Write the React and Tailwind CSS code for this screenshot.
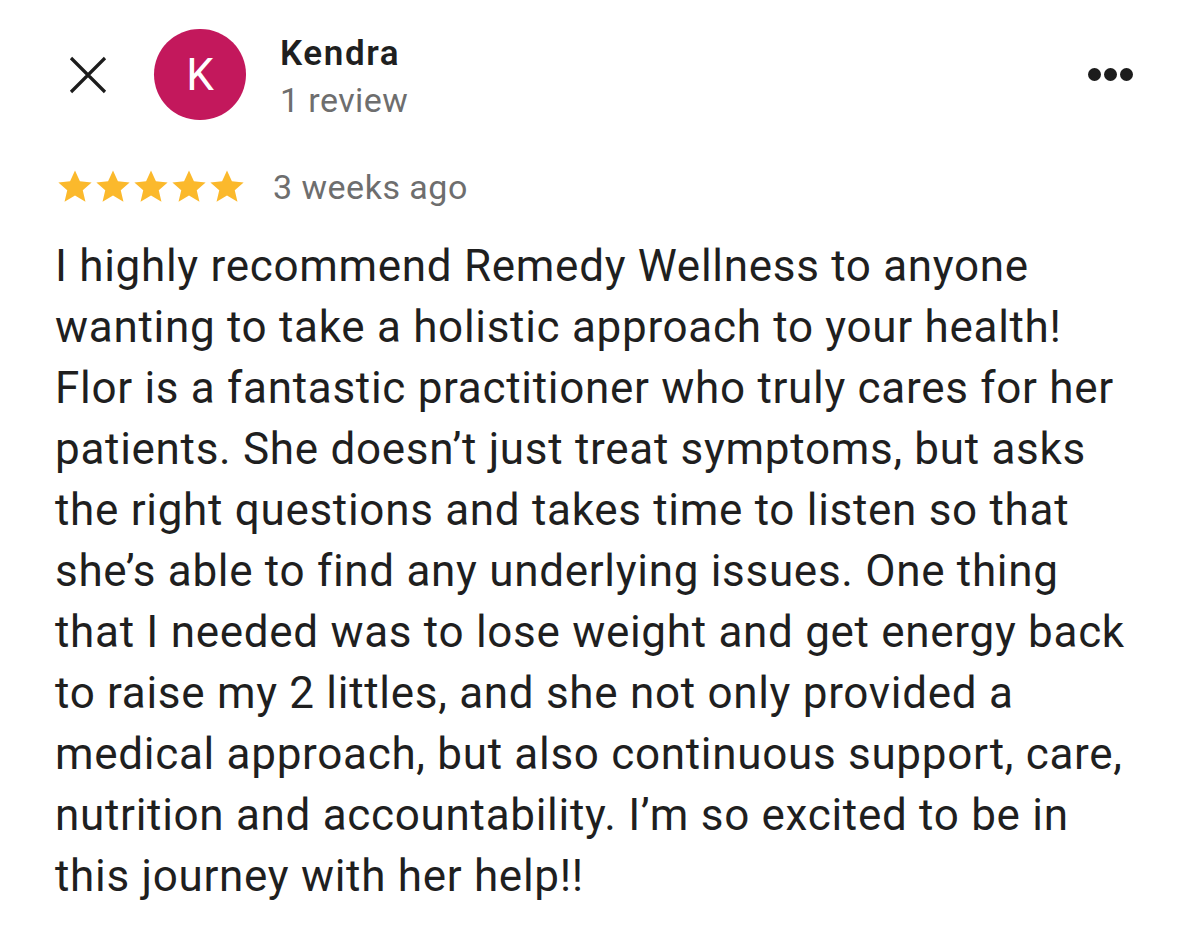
import React from 'react';

const lines = [
  'I highly recommend Remedy Wellness to anyone',
  'wanting to take a holistic approach to your health!',
  'Flor is a fantastic practitioner who truly cares for her',
  'patients. She doesn\u2019t just treat symptoms, but asks',
  'the right questions and takes time to listen so that',
  'she\u2019s able to find any underlying issues. One thing',
  'that I needed was to lose weight and get energy back',
  'to raise my 2 littles, and she not only provided a',
  'medical approach, but also continuous support, care,',
  'nutrition and accountability. I\u2019m so excited to be in',
  'this journey with her help!!',
];

const Star = () => (
  <svg width="38" height="38" viewBox="0 0 24 24" className="shrink-0">
    <path
      d="M12 1.5l3.1 6.9 7.4.7-5.6 4.9 1.7 7.3L12 17.4l-6.6 3.9 1.7-7.3L1.5 9.1l7.4-.7z"
      fill="#fbb92c"
    />
  </svg>
);

const App = () => {
  return (
    <div className="w-[1200px] h-[951px] bg-white overflow-hidden font-['Roboto',sans-serif] text-[#1f1f1f]">
      {/* header */}
      <div className="flex items-center pl-[69px] pr-[67px] pt-[29px]">
        <svg width="38" height="38" viewBox="0 0 38 38" className="shrink-0">
          <path d="M2 2L36 36M36 2L2 36" stroke="#1c1c1c" strokeWidth="3.2" />
        </svg>
        <div className="ml-[47px] w-[92px] h-[91px] rounded-full bg-[#c3185c] flex items-center justify-center text-white text-[44px] leading-none shrink-0">
          K
        </div>
        <div className="ml-[34px] flex flex-col self-start pt-[5px]">
          <span className="text-[35px] leading-[40px] font-semibold tracking-[1.6px] text-[#1f1f1f]">Kendra</span>
          <span className="mt-[6px] text-[34px] leading-[40px] tracking-[0.4px] text-[#6e6e6e]">1 review</span>
        </div>
        <div className="ml-auto flex gap-[3px] self-start mt-[39px]">
          <span className="w-[13px] h-[13px] rounded-full bg-[#1c1c1c]"></span>
          <span className="w-[13px] h-[13px] rounded-full bg-[#1c1c1c]"></span>
          <span className="w-[13px] h-[13px] rounded-full bg-[#1c1c1c]"></span>
        </div>
      </div>

      {/* rating */}
      <div className="flex items-center pl-[56px] mt-[48px]">
        <div className="flex">
          <Star />
          <Star />
          <Star />
          <Star />
          <Star />
        </div>
        <span className="ml-[27px] text-[34px] leading-none tracking-[0.5px] text-[#6e6e6e]">3 weeks ago</span>
      </div>

      {/* review body */}
      <div className="pl-[55px] mt-[30px] text-[44px] leading-[61px] tracking-[0.7px] text-[#1f1f1f]">
        {lines.map((l, i) => (
          <div key={i} className="whitespace-nowrap">{l}</div>
        ))}
      </div>
    </div>
  );
};

export default App;
